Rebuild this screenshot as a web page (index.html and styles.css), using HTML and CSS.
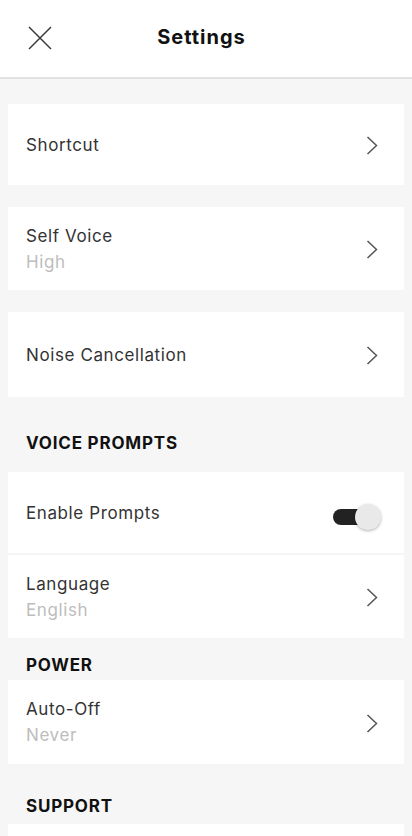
FILE: index.html
```html
<!DOCTYPE html>
<html lang="en">
<head>
<meta charset="utf-8">
<meta name="viewport" content="width=device-width, initial-scale=1">
<title>Settings</title>
<link rel="stylesheet" href="styles.css">
</head>
<body>
<header class="topbar">
  <button class="close" aria-label="Close">
    <svg width="24" height="24" viewBox="0 0 24 24"><path d="M1 1 L23 23 M23 1 L1 23" stroke="#3a3a3a" stroke-width="1.5" fill="none"/></svg>
  </button>
  <h1 class="title">Settings</h1>
  <span class="spacer"></span>
</header>
<main class="content">
  <div class="card row-single">
    <span class="label">Shortcut</span>
    <svg class="chev" width="12" height="19" viewBox="0 0 12 19"><path d="M1.5 1 L10.5 9.5 L1.5 18" stroke="#555" stroke-width="1.5" fill="none"/></svg>
  </div>
  <div class="card row-double">
    <div class="texts"><span class="label">Self Voice</span><span class="sub">High</span></div>
    <svg class="chev" width="12" height="19" viewBox="0 0 12 19"><path d="M1.5 1 L10.5 9.5 L1.5 18" stroke="#555" stroke-width="1.5" fill="none"/></svg>
  </div>
  <div class="card row-nc">
    <span class="label">Noise Cancellation</span>
    <svg class="chev" width="12" height="19" viewBox="0 0 12 19"><path d="M1.5 1 L10.5 9.5 L1.5 18" stroke="#555" stroke-width="1.5" fill="none"/></svg>
  </div>

  <h2 class="section s-voice">VOICE PROMPTS</h2>
  <div class="group">
    <div class="card row-single">
      <span class="label">Enable Prompts</span>
      <span class="switch"><span class="track"></span><span class="knob"></span></span>
    </div>
    <div class="card row-double">
      <div class="texts"><span class="label">Language</span><span class="sub">English</span></div>
      <svg class="chev" width="12" height="19" viewBox="0 0 12 19"><path d="M1.5 1 L10.5 9.5 L1.5 18" stroke="#555" stroke-width="1.5" fill="none"/></svg>
    </div>
  </div>

  <h2 class="section s-power">POWER</h2>
  <div class="card row-auto">
    <div class="texts"><span class="label">Auto-Off</span><span class="sub">Never</span></div>
    <svg class="chev" width="12" height="19" viewBox="0 0 12 19"><path d="M1.5 1 L10.5 9.5 L1.5 18" stroke="#555" stroke-width="1.5" fill="none"/></svg>
  </div>

  <h2 class="section s-support">SUPPORT</h2>
  <div class="card row-last"></div>
</main>
</body>
</html>
```
FILE: styles.css
```css
* { box-sizing: border-box; }
html, body { margin: 0; padding: 0; }
body {
  background: #f6f6f6;
  font-family: Inter, "Open Sans", sans-serif;
  color: #2d2d2d;
  width: 412px;
  height: 836px;
  overflow: hidden;
}
.topbar {
  height: 79px;
  background: #fff;
  border-bottom: 2px solid #e2e2e2;
  display: grid;
  grid-template-columns: 1fr auto 1fr;
  align-items: center;
  padding-right: 9px;
}
.close {
  justify-self: start;
  margin-left: 28px;
  margin-top: -2px;
  padding: 0;
  border: 0;
  background: none;
  width: 24px;
  height: 24px;
  display: flex;
}
.title {
  margin: 0 0 4px;
  font-size: 20px;
  font-weight: 700;
  letter-spacing: 1px;
  color: #111;
}
.content {
  padding: 25px 8px 0;
  display: flex;
  flex-direction: column;
}
.card {
  background: #fff;
  display: flex;
  align-items: center;
  justify-content: space-between;
  padding: 0 26px 0 18px;
}
.row-single { height: 81px; }
.row-double { height: 83px; }
.row-nc { height: 85px; }
.row-auto { height: 84px; }
.row-last { height: 12px; flex: none; }
.card + .card { margin-top: 22px; }
.group { display: flex; flex-direction: column; gap: 2px; }
.group .card + .card { margin-top: 0; }
.texts { display: flex; flex-direction: column; }
.label { font-size: 17px; line-height: 26px; color: #333; letter-spacing: 0.6px; }
.sub { font-size: 17px; line-height: 26px; color: #bdbdbd; letter-spacing: 0.6px; }
.chev { margin-top: 2px; }
.section {
  margin: 0;
  padding-left: 18px;
  font-size: 17px;
  line-height: 20px;
  font-weight: 700;
  letter-spacing: 0.8px;
  color: #111;
}
.s-voice { margin: 36px 0 19px; }
.s-power { margin: 17px 0 5px; }
.s-support { margin: 32px 0 8px; }
.switch {
  position: relative;
  width: 48px;
  height: 26px;
  margin-right: -3px;
  margin-top: 9px;
}
.track {
  position: absolute;
  left: 0;
  top: 5px;
  width: 40px;
  height: 16px;
  border-radius: 8px;
  background: #222;
}
.knob {
  position: absolute;
  right: 0;
  top: 0;
  width: 26px;
  height: 26px;
  border-radius: 50%;
  background: #e9e9e9;
  box-shadow: 0 1px 3px rgba(0,0,0,0.3);
}
```
